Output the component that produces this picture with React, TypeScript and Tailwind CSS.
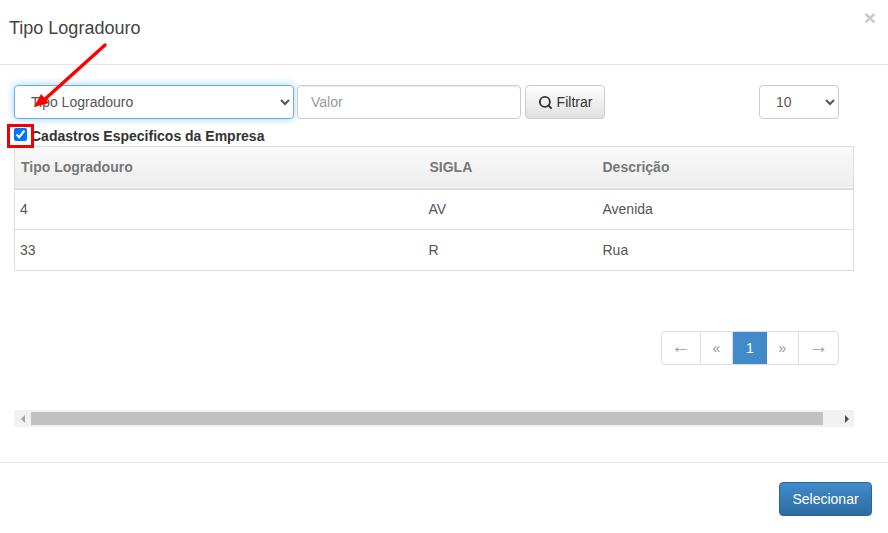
import { Search } from 'lucide-react'

const rows = [
  { id: '4', sigla: 'AV', descricao: 'Avenida' },
  { id: '33', sigla: 'R', descricao: 'Rua' },
]

const pageBtn = 'flex h-full items-center justify-center border-r border-[#ddd] text-[#999]'

export default function App() {
  return (
    <div className="relative flex h-[533px] w-[888px] flex-col overflow-hidden bg-white font-['Liberation_Sans',Arial,sans-serif] text-[14px] text-[#333]">
      {/* Header */}
      <div className="flex h-[65px] items-start justify-between border-b border-[#e5e5e5] pl-[9px] pr-[12px]">
        <h4 className="mt-[18px] text-[18px] leading-[20px] text-[#444]">Tipo Logradouro</h4>
        <span className="mt-[7px] text-[21px] font-bold leading-[21px] text-[#c8c8c8]">×</span>
      </div>

      {/* Body */}
      <div className="flex h-[398px] flex-col border-b border-[#e5e5e5] pl-[14px] pr-[34px] pt-[20px]">
        <div className="flex h-[34px]">
          <select className="h-[34px] w-[280px] rounded-[4px] border border-[#66afe9] bg-white px-3 text-[14px] text-[#555] shadow-[0_0_8px_rgba(102,175,233,0.6)] outline-none">
            <option>Tipo Logradouro</option>
          </select>
          <input
            placeholder="Valor"
            className="ml-[3px] h-[34px] w-[224px] rounded-[4px] border border-[#ccc] bg-white px-[13px] text-[14px] text-[#555] shadow-[inset_0_1px_1px_rgba(0,0,0,0.075)] outline-none placeholder:text-[#999]"
          />
          <button className="ml-[4px] flex h-[34px] w-[80px] items-center justify-center gap-[4px] rounded-[4px] border border-[#ccc] bg-gradient-to-b from-white to-[#e0e0e0] text-[14px] text-[#333]">
            <Search size={15} strokeWidth={3} />
            Filtrar
          </button>
          <select className="ml-[154px] h-[34px] w-[80px] rounded-[4px] border border-[#ccc] bg-white px-3 text-[14px] text-[#555] outline-none">
            <option>10</option>
          </select>
        </div>

        <label className="mt-[9px] flex h-[18px] items-start">
          <input type="checkbox" defaultChecked className="h-[13px] w-[13px] accent-[#0075ff]" />
          <span className="ml-[4px] text-[14px] font-bold leading-[16px] text-[#333]">
            Cadastros Especificos da Empresa
          </span>
        </label>

        {/* Table */}
        <table className="w-[840px] table-fixed border-collapse border border-[#ddd] text-[14px]">
          <thead>
            <tr className="h-[42px] border-b-2 border-[#ddd] bg-gradient-to-b from-[#fafafa] to-[#ededed] text-left font-bold text-[#777]">
              <th className="w-[414px] px-[6px]">Tipo Logradouro</th>
              <th className="w-[173px] px-[1px]">SIGLA</th>
              <th className="pl-[1px]">Descrição</th>
            </tr>
          </thead>
          <tbody className="text-[#555]">
            {rows.map((row) => (
              <tr key={row.id} className="h-[41px] border-b border-[#ddd]">
                <td className="px-[5px]">{row.id}</td>
                <td className="px-0">{row.sigla}</td>
                <td className="pl-[1px]">{row.descricao}</td>
              </tr>
            ))}
          </tbody>
        </table>

        {/* Pagination */}
        <div className="ml-[647px] mt-[60px] flex h-[34px] w-[178px] items-center overflow-hidden rounded-[4px] border border-[#ddd]">
          <span className={`${pageBtn} w-[39px] pb-[4px] text-[20px] text-[#b09a90]`}>←</span>
          <span className={`${pageBtn} w-[32px]`}>«</span>
          <span className="flex h-full w-[34px] items-center justify-center bg-[#428bca] text-white">1</span>
          <span className={`${pageBtn} w-[32px]`}>»</span>
          <span className="flex h-full flex-1 items-center justify-center pb-[4px] text-[20px] text-[#b09a90]">→</span>
        </div>

        {/* Horizontal scrollbar */}
        <div className="mt-[45px] flex h-[17px] w-[840px] items-center bg-[#f1f1f1]">
          <span className="flex w-[17px] justify-center">
            <span className="h-0 w-0 border-y-[4px] border-r-[4px] border-y-transparent border-r-[#a3a3a3]" />
          </span>
          <div className="h-[13px] w-[792px] bg-[#c1c1c1]" />
          <span className="flex flex-1 justify-center pl-[16px]">
            <span className="h-0 w-0 border-y-[4px] border-l-[4px] border-y-transparent border-l-[#505050]" />
          </span>
        </div>
      </div>

      {/* Footer */}
      <div className="flex justify-end pr-[16px] pt-[19px]">
        <button className="h-[34px] w-[93px] rounded-[4px] border border-[#2b669a] bg-gradient-to-b from-[#428bca] to-[#2d6ca2] text-[14px] text-white">
          Selecionar
        </button>
      </div>

      {/* Annotation overlays */}
      <div className="absolute left-[7px] top-[124px] h-[24px] w-[27px] border-[3px] border-[#f00000]" />
      <svg className="absolute left-0 top-0" width="120" height="120" viewBox="0 0 120 120" fill="none">
        <path d="M105 45 L44 100" stroke="#ff0000" strokeWidth="3.4" strokeLinecap="round" />
        <path d="M34 107 L41 94 L49 103 Z" fill="#ff0000" />
      </svg>
    </div>
  )
}
